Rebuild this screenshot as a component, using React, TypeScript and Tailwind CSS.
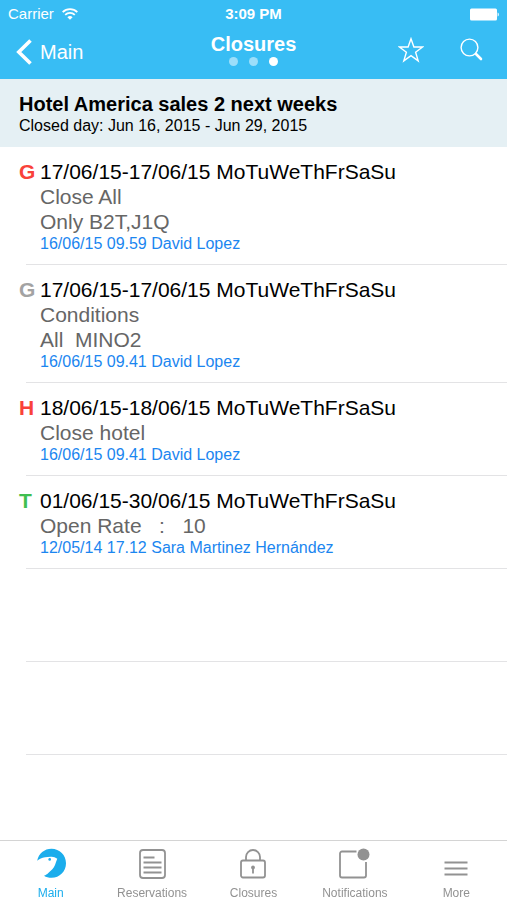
import type { ReactNode } from "react";

type Entry = {
  code: string;
  color: string;
  title: string;
  lines: string[];
  meta: string;
};

const entries: Entry[] = [
  {
    code: "G",
    color: "text-[#f9423a]",
    title: "17/06/15-17/06/15 MoTuWeThFrSaSu",
    lines: ["Close All", "Only B2T,J1Q"],
    meta: "16/06/15 09.59 David Lopez",
  },
  {
    code: "G",
    color: "text-[#a3a3a3]",
    title: "17/06/15-17/06/15 MoTuWeThFrSaSu",
    lines: ["Conditions", "All  MINO2"],
    meta: "16/06/15 09.41 David Lopez",
  },
  {
    code: "H",
    color: "text-[#f9423a]",
    title: "18/06/15-18/06/15 MoTuWeThFrSaSu",
    lines: ["Close hotel"],
    meta: "16/06/15 09.41 David Lopez",
  },
  {
    code: "T",
    color: "text-[#3fbf50]",
    title: "01/06/15-30/06/15 MoTuWeThFrSaSu",
    lines: ["Open Rate   :   10"],
    meta: "12/05/14 17.12 Sara Martinez Hernández",
  },
];

function StatusBar() {
  return (
    <div className="grid h-7 grid-cols-3 items-center px-2 text-[15px]">
      <div className="flex items-center gap-2">
        <span>Carrier</span>
        <svg width="16" height="12" viewBox="0 0 16 12" fill="none" stroke="currentColor" strokeWidth="1.8">
          <path d="M.7 4.2a10.3 10.3 0 0 1 14.6 0" />
          <path d="M3.2 6.900a6.800 6.800 0 0 1 9.600 0" />
          <path d="M8 11.800 5.400 9.200a3.700 3.700 0 0 1 5.200 0z" fill="currentColor" stroke="none" />
        </svg>
      </div>
      <span className="text-center font-bold">3:09 PM</span>
      <svg className="justify-self-end" width="30" height="13" viewBox="0 0 30 13" fill="currentColor">
        <rect x="1" y="0.5" width="27" height="12" rx="1.5" />
        <path d="M28.600 4.500c1.600.500 1.600 3.500 0 4z" />
      </svg>
    </div>
  );
}

function NavBar() {
  return (
    <div className="grid h-[51px] grid-cols-3 items-center pb-1 pl-4 pr-6">
      <button className="flex items-center gap-2 text-xl">
        <svg width="16" height="26" viewBox="0 0 16 26" fill="none" stroke="currentColor" strokeWidth="3.6">
          <path d="M14.5 1.5 2.8 13l11.7 11.5" />
        </svg>
        Main
      </button>
      <div className="flex flex-col items-center pb-1 pl-2">
        <h1 className="text-xl leading-6 font-bold">Closures</h1>
        <div className="flex h-3 items-center gap-[11px]">
          <span className="size-[9px] rounded-full bg-white/50" />
          <span className="size-[9px] rounded-full bg-white/50" />
          <span className="size-[9px] rounded-full bg-white" />
        </div>
      </div>
      <div className="flex items-center justify-end gap-9 pb-1">
        <button aria-label="Favourite">
          <svg width="26" height="26" viewBox="0 0 26 26" fill="none" stroke="currentColor" strokeWidth="1.4">
            <path d="m13 1.8 2.9 8.2h8.7l-7 5.3 2.6 8.6-7.2-5.2-7.2 5.2 2.6-8.6-7-5.3h8.7z" />
          </svg>
        </button>
        <button aria-label="Search">
          <svg width="23" height="23" viewBox="0 0 23 23" fill="none" stroke="currentColor" strokeLinecap="round">
            <circle cx="9.5" cy="9.5" r="8.4" strokeWidth="1.4" />
            <path d="m16 16 5 5" strokeWidth="2.6" />
          </svg>
        </button>
      </div>
    </div>
  );
}

function EntryRow({ entry }: { entry: Entry }) {
  return (
    <li>
      <div className="flex pt-3 pb-[10px] pl-[19px] text-[21px] leading-[25px] whitespace-pre">
        <span className={`w-[21px] font-bold ${entry.color}`}>{entry.code}</span>
        <div>
          <h3 className="text-black">{entry.title}</h3>
          {entry.lines.map((line) => (
            <p key={line} className="text-[#666666]">
              {line}
            </p>
          ))}
          <p className="text-base leading-5 text-[#1b86f0]">{entry.meta}</p>
        </div>
      </div>
      <div className="ml-[26px] h-px bg-[#e3e3e5]" />
    </li>
  );
}

function Tab({ label, active, children }: { label: string; active?: boolean; children: ReactNode }) {
  return (
    <button
      className={`flex flex-col items-center gap-1 pt-[6px] text-xs ${active ? "text-[#1badec]" : "text-[#929292]"}`}
    >
      <svg width="34" height="34" viewBox="0 0 34 34" fill="none" stroke="currentColor" strokeWidth="1.8">
        {children}
      </svg>
      <span className="leading-4">{label}</span>
    </button>
  );
}

export default function App() {
  return (
    <div className="flex min-h-screen flex-col bg-white font-['Liberation_Sans',sans-serif]">
      <header className="bg-[#38bdf4] text-white">
        <StatusBar />
        <NavBar />
      </header>

      <main className="flex-1">
        <section className="bg-[#e5f0f4] pt-[13px] pb-[11px] pl-[19px] text-black">
          <h2 className="text-xl leading-6 font-bold">Hotel America sales 2 next weeks</h2>
          <p className="text-base leading-5">Closed day: Jun 16, 2015 - Jun 29, 2015</p>
        </section>
        <ul>
          {entries.map((entry, i) => (
            <EntryRow key={i} entry={entry} />
          ))}
          {/* empty rows */}
          <li className="ml-[26px] h-[93px] border-b border-[#e3e3e5]" />
          <li className="ml-[26px] h-[93px] border-b border-[#e3e3e5]" />
        </ul>
      </main>

      <nav className="sticky bottom-0 grid h-[60px] grid-cols-5 border-t border-[#d4d4d4] bg-white">
        <Tab label="Main" active>
          <path
            d="M3.200 13.700C4.500 6.500 10.500 1.700 17.500 1.700c8.200 0 14.500 6.400 14.500 14.500S25.700 30.800 17.500 30.800c-2.800 0-5.400-.7-7.500-2.100 1.800-.6 3-1.400 4.300-2.700 3-2.500 5.500-5 6.700-8 .8-2 1.200-4 2.300-6.300-1.800-1.300-3.600-2-5.600-2-2.400-.1-4.600.1-6.700.6-3.200.7-5.600 1.700-7.800 3.400z"
            fill="currentColor"
            stroke="none"
          />
          <circle cx="15.700" cy="12.400" r="1.300" fill="currentColor" stroke="none" />
        </Tab>
        <Tab label="Reservations">
          <rect x="5" y="3" width="25" height="28" rx="3" />
          <path d="M8.500 10.500h11M8.500 15.500h18M8.500 20.500h18M8.500 25.500h18" />
        </Tab>
        <Tab label="Closures">
          <path d="M10 13.500V10a7 7 0 0 1 14 0v3.500" />
          <rect x="5" y="13.500" width="24" height="17" rx="2" />
          <circle cx="17" cy="20.500" r="1.900" fill="currentColor" stroke="none" />
          <path d="M17 20v6.500" />
        </Tab>
        <Tab label="Notifications">
          <path d="M18.500 4.500H4a2 2 0 0 0-2 2v22a2 2 0 0 0 2 2h22a2 2 0 0 0 2-2V15" />
          <circle cx="25.500" cy="7.500" r="6" fill="currentColor" stroke="none" />
        </Tab>
        <Tab label="More">
          <path d="M5.500 15.500h23M5.500 21.500h23M5.500 27.500h23" strokeWidth="2" />
        </Tab>
      </nav>
    </div>
  );
}
